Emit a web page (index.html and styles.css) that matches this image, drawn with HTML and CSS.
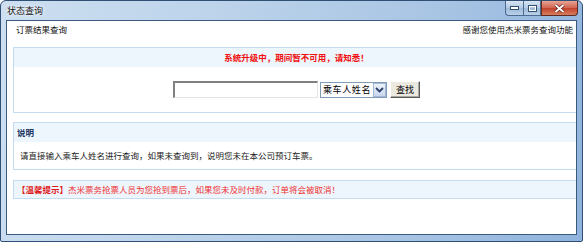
FILE: index.html
```html
<!DOCTYPE html>
<html lang="zh-CN">
<head>
    <meta charset="UTF-8">
    <title>状态查询</title>
    <link rel="stylesheet" href="styles.css">
</head>
<body>
    <!-- Fenster -->
    <div class="window">
        <div class="titlebar">
            <span class="title">状态查询</span>
            <div class="caption-buttons">
                <span class="cap cap-min">
                    <svg width="9" height="4" viewBox="0 0 9 4"><rect x="0.5" y="0.5" width="8" height="3" fill="#fff" stroke="#33506f"/></svg>
                </span>
                <span class="cap cap-max">
                    <svg width="9" height="7" viewBox="0 0 9 7"><rect x="0.5" y="0.5" width="8" height="6" fill="none" stroke="#33506f"/><rect x="1.5" y="1.5" width="6" height="4" fill="none" stroke="#fff"/></svg>
                </span>
                <span class="cap cap-close">
                    <svg width="11" height="9" viewBox="0 0 11 9"><path d="M1.5 1 L9.5 8 M9.5 1 L1.5 8" stroke="#5a1d14" stroke-width="3.2"/><path d="M1.5 1 L9.5 8 M9.5 1 L1.5 8" stroke="#fff" stroke-width="1.8"/></svg>
                </span>
            </div>
        </div>

        <div class="client">
            <!-- Kopfzeile -->
            <div class="topline">
                <span>订票结果查询</span>
                <span>感谢您使用杰米票务查询功能</span>
            </div>

            <!-- Suche -->
            <div class="panel search-panel">
                <div class="panel-head notice">系统升级中，期间暂不可用，请知悉！</div>
                <div class="search-row">
                    <input type="text" class="name-input">
                    <span class="select-wrap">
                        <select class="field-select">
                            <option>乘车人姓名</option>
                        </select>
                        <span class="select-arrow">
                            <svg width="9" height="6" viewBox="0 0 9 6"><path d="M1 1 L4.5 4.5 L8 1" fill="none" stroke="#2b3f66" stroke-width="1.8"/></svg>
                        </span>
                    </span>
                    <button class="search-button">查找</button>
                </div>
            </div>

            <!-- Erklärung -->
            <div class="panel">
                <div class="panel-head">说明</div>
                <p class="panel-text">请直接输入乘车人姓名进行查询，如果未查询到，说明您未在本公司预订车票。</p>
            </div>

            <!-- Hinweis -->
            <div class="panel tip">
                <b>【温馨提示】</b>杰米票务抢票人员为您抢到票后，如果您未及时付款，订单将会被取消！
            </div>
        </div>
    </div>
</body>
</html>
```

FILE: styles.css
```css
/* Grunddesign */
body {
    margin: 0;
    padding: 0;
    width: 583px;
    height: 242px;
    overflow: hidden;
    background-color: #fff;
    font-family: "Noto Sans CJK SC", "Liberation Sans", sans-serif;
    font-size: 8.5px;
    color: #222;
}

/* Fensterrahmen */
.window {
    box-sizing: border-box;
    width: 583px;
    height: 242px;
    display: flex;
    flex-direction: column;
    border: 1px solid #2f4f74;
    border-radius: 6px 6px 2px 2px;
    background: linear-gradient(100deg, #cddff1 0%, #bcd3ea 35%, #a9c5e4 70%, #8fb3dc 100%);
}

.titlebar {
    height: 19px;
    display: flex;
    align-items: flex-start;
    justify-content: space-between;
}

.title {
    margin: 4px 0 0 6px;
    font-size: 9px;
    line-height: 11px;
    color: #111;
    text-shadow: 0 0 4px #fff, 0 0 2px #fff;
}

.caption-buttons {
    display: flex;
    margin-right: 4px;
}

.cap {
    box-sizing: border-box;
    height: 15px;
    display: flex;
    align-items: center;
    justify-content: center;
    border: 1px solid #4a6a8e;
    border-top: none;
    background: linear-gradient(#d6e4f3, #b3c9e2 50%, #9db9d9 51%, #b9d0e9);
}

.cap-min {
    width: 18px;
    border-radius: 0 0 0 4px;
    border-right: none;
}

.cap-max {
    width: 18px;
}

.cap-close {
    width: 37px;
    border-color: #5e2a22;
    border-radius: 0 0 4px 0;
    background: linear-gradient(#e8a493, #d0634f 50%, #c0412b 51%, #d87d5c);
}

/* Innenbereich */
.client {
    flex: 1;
    margin: 0 5px 6px 5px;
    border: 1px solid #3a5a80;
    background-color: #fff;
    overflow: hidden;
}

.topline {
    height: 16px;
    display: flex;
    align-items: center;
    justify-content: space-between;
    padding: 0 3px 0 9px;
    line-height: 16px;
    color: #111;
}

/* Boxen */
.panel {
    box-sizing: border-box;
    width: 567px;
    margin-left: 6px;
    border: 1px solid #c6dbef;
}

.search-panel {
    margin-top: 10px;
    height: 66px;
}

.panel + .panel {
    margin-top: 9px;
}

.panel-head {
    height: 19px;
    line-height: 19px;
    padding-left: 3px;
    background-color: #edf5fd;
    font-weight: bold;
    color: #1c3560;
}

.panel-head.notice {
    text-align: center;
    padding-left: 0;
    color: #f01010;
}

.search-row {
    display: flex;
    justify-content: center;
    align-items: center;
    gap: 2px;
    padding-top: 14px;
}

.name-input {
    box-sizing: border-box;
    width: 145px;
    height: 17px;
    margin: 0;
    padding: 0;
    border: 1px solid #888;
    border-right-color: #e4e4e4;
    border-bottom-color: #e4e4e4;
    border-top-width: 2px;
    border-left-width: 2px;
    border-top-color: #808080;
    border-left-color: #808080;
}

.select-wrap {
    position: relative;
    display: inline-block;
    height: 16px;
}

.field-select {
    box-sizing: border-box;
    -webkit-appearance: none;
    appearance: none;
    width: 67px;
    height: 16px;
    margin: 0;
    padding: 0 0 0 2px;
    border: 1px solid #7f9db9;
    background-color: #fff;
    font-family: "Noto Sans CJK SC", sans-serif;
    font-size: 9px;
    color: #000;
    letter-spacing: 0.6px;
}

.select-arrow {
    position: absolute;
    right: 1px;
    top: 1px;
    width: 13px;
    height: 14px;
    display: flex;
    align-items: center;
    justify-content: center;
    border: 1px solid #a5b7d2;
    box-sizing: border-box;
    background: linear-gradient(#eef3fb, #c7d6ee);
}

.search-button {
    box-sizing: border-box;
    width: 30px;
    height: 17px;
    margin: 0 0 0 1px;
    padding: 0;
    border: 1px solid;
    border-color: #fff #5a5a5a #5a5a5a #fff;
    background-color: #ece9e0;
    font-family: "Noto Sans CJK SC", sans-serif;
    font-size: 9px;
    color: #000;
    box-shadow: inset -1px -1px 0 #a8a8a0;
}

.panel-text {
    margin: 0;
    height: 27px;
    line-height: 27px;
    padding-left: 6px;
    color: #222;
}

/* Hinweis */
.tip {
    height: 19px;
    margin-top: 10px;
    line-height: 17px;
    padding-left: 3px;
    background-color: #edf5fd;
    color: #f03030;
}

.panel + .tip {
    margin-top: 10px;
}

.tip b {
    color: #e01a1a;
}
```
